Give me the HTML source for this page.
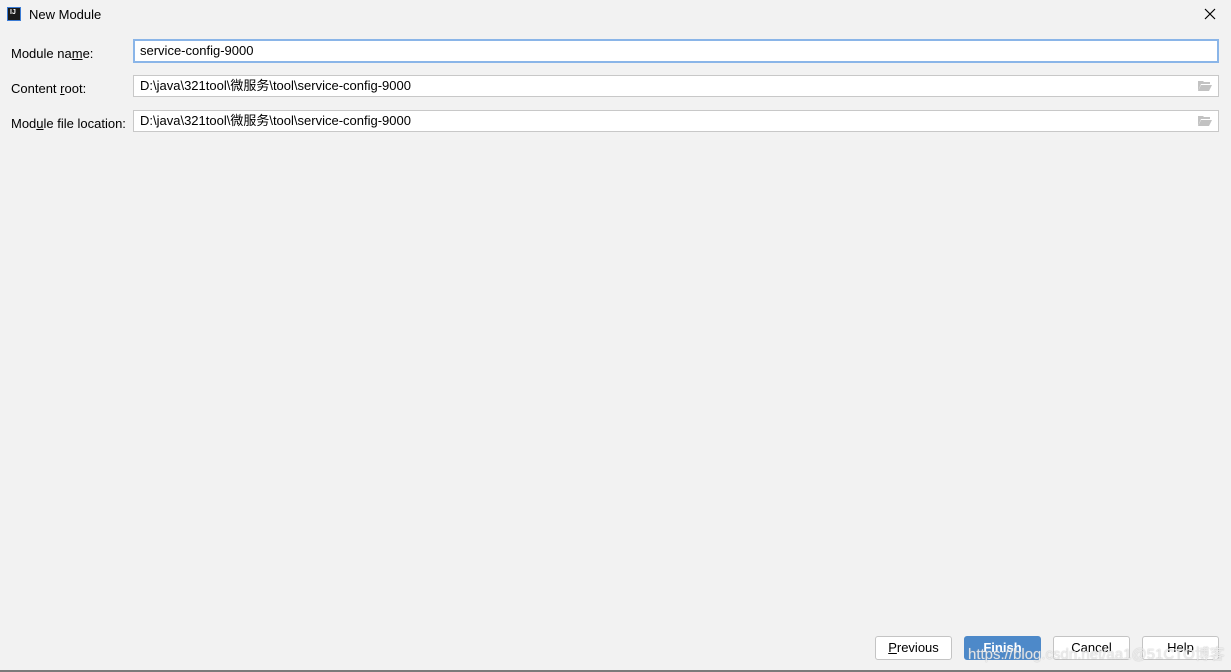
<!DOCTYPE html>
<html style="overflow:hidden"><head><meta charset="utf-8"><style>
html,body{overflow:hidden}
body{margin:0;width:1231px;height:672px;background:#f2f2f2;font-family:"Liberation Sans","Noto Sans CJK SC",sans-serif;font-size:13px;color:#000;position:relative}
.a{position:absolute}
.lbl{left:11px}
.f{left:133px;height:22px;background:#fff;border:1px solid #c8c8c8;line-height:20px;padding-left:6px;box-sizing:border-box;width:1086px}
.btn{top:636px;height:24px;border:1px solid #c4c4c4;background:#fff;border-radius:3px;box-sizing:border-box;text-align:center;line-height:22px;width:77px}
.fo{right:6px;top:5px;width:14px;height:10px}
</style></head><body>
<div class="a" style="left:7px;top:7px;width:14px;height:14px;background:#1a1a1a;border:1px solid #3a7bd5;box-sizing:border-box;color:#fff;font-size:7px;font-weight:bold;line-height:9px;padding-left:2px">IJ</div>
<div class="a" style="left:29px;top:7px;font-size:13px">New Module</div>
<svg class="a" style="left:1204px;top:8px" width="12" height="12" viewBox="0 0 12 12"><path d="M1 1L11 11M11 1L1 11" stroke="#000" stroke-width="1.2"/></svg>
<div class="a lbl" style="top:46px">Module na<u>m</u>e:</div>
<div class="a lbl" style="top:81px">Content <u>r</u>oot:</div>
<div class="a lbl" style="top:116px">Mod<u>u</u>le file location:</div>
<div class="a f" style="top:39px;height:24px;border:2px solid #8ab5e8;line-height:20px;padding-left:5px">service-config-9000</div>
<div class="a f" style="top:75px">D:\java\321tool\微服务\tool\service-config-9000<svg class="a fo" viewBox="0 0 14 10"><path d="M0 0h5l1 1h6v2H3L0 10z" fill="#c2c2c2"/><path d="M3 4h11l-3 6H0z" fill="#c2c2c2"/></svg></div>
<div class="a f" style="top:110px">D:\java\321tool\微服务\tool\service-config-9000<svg class="a fo" viewBox="0 0 14 10"><path d="M0 0h5l1 1h6v2H3L0 10z" fill="#c2c2c2"/><path d="M3 4h11l-3 6H0z" fill="#c2c2c2"/></svg></div>
<div class="a btn" style="left:875px"><u>P</u>revious</div>
<div class="a btn" style="left:964px;background:#4d89c9;border-color:#4d89c9;color:#fff;font-weight:bold">Finish</div>
<div class="a btn" style="left:1053px">Cancel</div>
<div class="a btn" style="left:1142px">Help</div>
<div class="a" style="left:968px;top:643px;font-size:15px;white-space:nowrap;color:rgba(255,255,255,.7);text-shadow:0 0 1px #aaa">https://blog.csdn.net/aa1@51CTO博客</div>
<div class="a" style="left:0;top:670px;width:1231px;height:2px;background:#7a7a7a"></div>
</body></html>
